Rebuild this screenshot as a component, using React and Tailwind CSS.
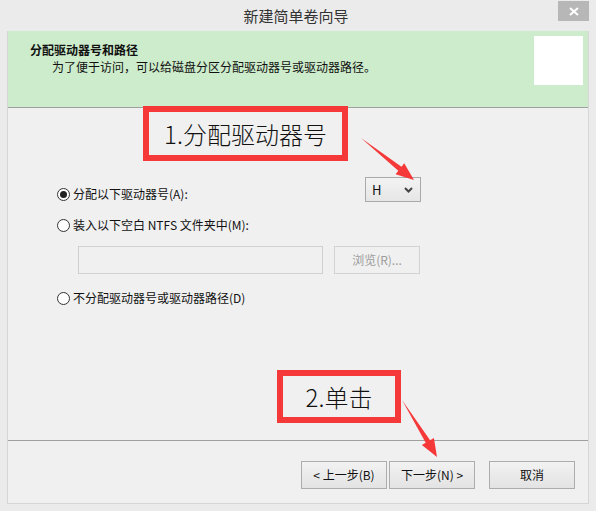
import React from 'react'

const font = { fontFamily: '"Noto Sans CJK SC", "Noto Sans", sans-serif' }

function Radio({ checked, label }) {
  return (
    <div className="flex items-center h-[20px]">
      <span className="w-[13px] h-[13px] rounded-full border border-[#333] bg-white flex items-center justify-center">
        {checked && <span className="w-[7px] h-[7px] rounded-full bg-[#222]" />}
      </span>
      <span className="ml-[3px] text-[12px] text-[#111] leading-none">{label}</span>
    </div>
  )
}

function Button({ children }) {
  return (
    <button className="w-[86px] h-[28px] border border-[#adadad] bg-gradient-to-b from-[#f2f2f2] to-[#e3e3e3] text-[12px] text-[#111] flex items-center justify-center">
      {children}
    </button>
  )
}

export default function App() {
  return (
    <div className="relative w-[596px] h-[511px] bg-[#ebebeb] flex flex-col overflow-hidden" style={font}>
      {/* Title bar */}
      <div className="relative h-[31px] flex items-center justify-center">
        <span className="text-[15px] text-[#333] leading-none -ml-[4px]">新建简单卷向导</span>
        <div className="absolute right-[7px] top-[1px] w-[31px] h-[20px] bg-[#b7b7b7] flex items-center justify-center">
          <svg width="10" height="9" viewBox="0 0 10 9">
            <path d="M1 1 L9 8 M9 1 L1 8" stroke="white" strokeWidth="2" />
          </svg>
        </div>
      </div>

      {/* Panel */}
      <div className="ml-[7px] w-[582px] h-[473px] bg-[#f0f0f0] border-x border-b border-[#d6d6d6] flex flex-col">
        <div className="h-[77px] bg-[#cdeccb] border-b border-[#a0a0a0] flex justify-between">
          <div className="pl-[22px] pt-[11px]">
            <div className="text-[12px] font-bold text-[#111] leading-[16px]">分配驱动器号和路径</div>
            <div className="pl-[22px] text-[12px] text-[#111] leading-[16px] mt-[1px]">为了便于访问，可以给磁盘分区分配驱动器号或驱动器路径。</div>
          </div>
          <div className="mt-[5px] mr-[5px] w-[49px] h-[49px] bg-white" />
        </div>

        <div className="flex-1 pt-[69px] pl-[49px]">
          <div className="flex items-start">
            <div className="w-[308px] pt-[7px]">
              <Radio checked label="分配以下驱动器号(A):" />
            </div>
            <div className="w-[56px] h-[25px] border border-[#a9a9a9] bg-gradient-to-b from-[#f3f3f3] to-[#e6e6e6] flex items-center justify-between pl-[6px] pr-[7px]">
              <span className="text-[13px] text-[#111] leading-none">H</span>
              <svg width="9" height="6" viewBox="0 0 9 6">
                <path d="M1 1 L4.5 4.5 L8 1" stroke="#444" strokeWidth="2" fill="none" />
              </svg>
            </div>
          </div>
          <div className="mt-[11px]">
            <Radio label="装入以下空白 NTFS 文件夹中(M):" />
          </div>
          <div className="mt-[11px] ml-[21px] flex gap-[11px]">
            <div className="w-[245px] h-[28px] border border-[#d0d0d0] bg-[#f0f0f0]" />
            <div className="w-[86px] h-[28px] border border-[#d3d3d3] bg-[#f0f0f0] flex items-center justify-center text-[12px] text-[#9c9c9c]">
              浏览(R)...
            </div>
          </div>
          <div className="mt-[14px]">
            <Radio label="不分配驱动器号或驱动器路径(D)" />
          </div>
        </div>

        <div className="border-t border-[#a0a0a0] h-[63px] flex justify-end items-start pt-[20px] pr-[13px]">
          <div className="flex gap-[2px]">
            <Button>&lt; 上一步(B)</Button>
            <Button>下一步(N) &gt;</Button>
          </div>
          <div className="ml-[14px]">
            <Button>取消</Button>
          </div>
        </div>
      </div>

      {/* Annotations */}
      <div className="absolute left-[143px] top-[106px] w-[205px] h-[55px] border-[6px] border-[#f53838] bg-[#f0f0f0] flex items-center justify-center">
        <span className="text-[24px] font-light text-[#111] leading-none">1.分配驱动器号</span>
      </div>
      <div className="absolute left-[277px] top-[370px] w-[124px] h-[53px] border-[6px] border-[#f53838] bg-[#f0f0f0] flex items-center justify-center">
        <span className="text-[24px] font-light text-[#111] leading-none">2.单击</span>
      </div>
      <svg className="absolute inset-0 pointer-events-none" width="596" height="511">
        <polygon points="361,138 398.3,170.8 395.6,174.3 414,180 404.2,163.3 401.5,166.8" fill="#f53838" />
        <polygon points="402,400 425.7,442.8 421.9,445.1 437,457 433.9,437.9 430.1,440.2" fill="#f53838" />
      </svg>
    </div>
  )
}
